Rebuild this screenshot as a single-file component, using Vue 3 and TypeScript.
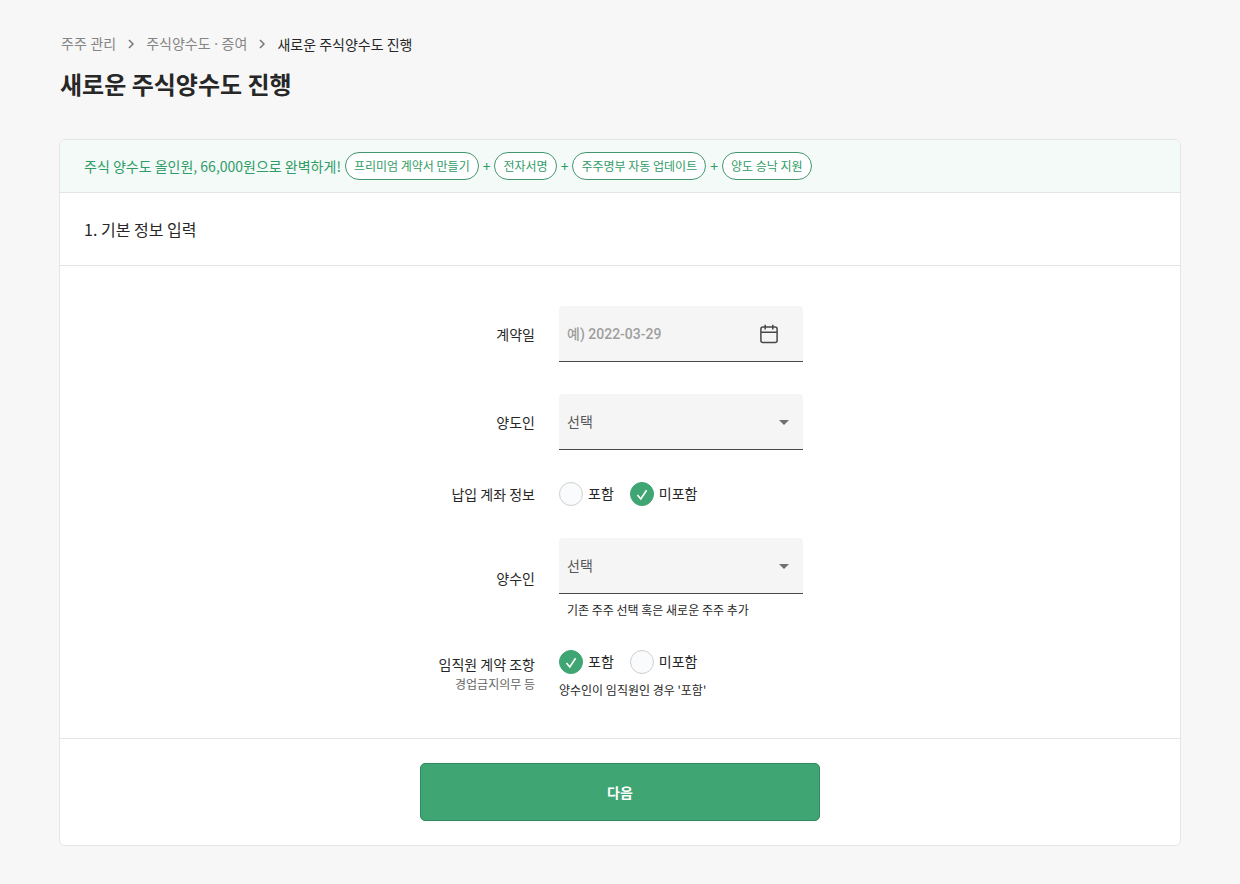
<script setup lang="ts">
import { ref } from 'vue'

const crumbs: string[] = ['주주 관리', '주식양수도 · 증여']
const features: string[] = ['프리미엄 계약서 만들기', '전자서명', '주주명부 자동 업데이트', '양도 승낙 지원']
const choices = [
  { value: 'include', label: '포함' },
  { value: 'exclude', label: '미포함' },
]

const contractDate = ref('')
const transferor = ref('')
const transferee = ref('')
const account = ref('exclude')
const clause = ref('include')
</script>

<template>
  <main class="page">
    <nav class="crumbs" aria-label="breadcrumb">
      <template v-for="crumb in crumbs" :key="crumb">
        <a href="#">{{ crumb }}</a>
        <svg width="6" height="10" viewBox="0 0 6 10" aria-hidden="true">
          <path d="M1 1l4 4-4 4" fill="none" stroke="#757575" stroke-width="1.5" />
        </svg>
      </template>
      <span class="current" aria-current="page">새로운 주식양수도 진행</span>
    </nav>
    <h1>새로운 주식양수도 진행</h1>

    <form class="card" @submit.prevent>
      <div class="banner">
        <span class="lead">주식 양수도 올인원, 66,000원으로 완벽하게!</span>
        <template v-for="(feature, i) in features" :key="feature">
          <span v-if="i > 0">+</span>
          <span class="chip">{{ feature }}</span>
        </template>
      </div>
      <h2>1. 기본 정보 입력</h2>

      <div class="fields">
        <label class="name" for="date">계약일</label>
        <div class="box">
          <input id="date" v-model="contractDate" class="date" type="text" placeholder="예) 2022-03-29" />
          <button class="calendar" type="button" aria-label="날짜 선택">
            <svg width="20" height="20" viewBox="0 0 20 20" fill="none" stroke="#484848" stroke-width="1.5" aria-hidden="true">
              <rect x="1.9" y="3" width="16.2" height="15.5" rx="2" />
              <path d="M2 8.2h16M6.2 .8v4.6M13.8 .8v4.6" />
            </svg>
          </button>
        </div>

        <label class="name" for="transferor">양도인</label>
        <div class="box">
          <select id="transferor" v-model="transferor">
            <option value="">선택</option>
          </select>
          <svg class="arrow" width="10" height="7" viewBox="0 0 10 7" aria-hidden="true"><path d="M0 2h10L5 7z" fill="#707070" /></svg>
        </div>

        <span id="account-label" class="name">납입 계좌 정보</span>
        <div class="radios" role="radiogroup" aria-labelledby="account-label">
          <label v-for="choice in choices" :key="choice.value">
            <input v-model="account" type="radio" name="account" :value="choice.value" />
            <svg class="tick" width="24" height="24" viewBox="0 0 24 24" aria-hidden="true"><path d="M7.4 13l3.4 4 5.8-8.8" /></svg>
            <span>{{ choice.label }}</span>
          </label>
        </div>

        <label class="name" for="transferee">양수인</label>
        <div>
          <div class="box">
            <select id="transferee" v-model="transferee" aria-describedby="transferee-hint">
              <option value="">선택</option>
            </select>
            <svg class="arrow" width="10" height="7" viewBox="0 0 10 7" aria-hidden="true"><path d="M0 2h10L5 7z" fill="#707070" /></svg>
          </div>
          <p id="transferee-hint" class="hint indented">기존 주주 선택 혹은 새로운 주주 추가</p>
        </div>

        <div id="clause-label" class="name">
          임직원 계약 조항
          <small>경업금지의무 등</small>
        </div>
        <div>
          <div class="radios" role="radiogroup" aria-labelledby="clause-label">
            <label v-for="choice in choices" :key="choice.value">
              <input v-model="clause" type="radio" name="clause" :value="choice.value" />
              <svg class="tick" width="24" height="24" viewBox="0 0 24 24" aria-hidden="true"><path d="M7.4 13l3.4 4 5.8-8.8" /></svg>
              <span>{{ choice.label }}</span>
            </label>
          </div>
          <p class="hint">양수인이 임직원인 경우 '포함'</p>
        </div>
      </div>

      <footer>
        <button class="next" type="submit">다음</button>
      </footer>
    </form>
  </main>
</template>

<style>
body {
  margin: 0;
  background: #f7f7f7;
}
</style>

<style scoped>
.page,
.page * {
  box-sizing: border-box;
}
.page {
  padding: 32px 59px 38px;
  color: #272727;
  font: 400 14px/24px "Noto Sans CJK KR", sans-serif;
}
.crumbs {
  display: flex;
  align-items: center;
  gap: 12px;
  padding-left: 2px;
}
.crumbs a {
  color: #858585;
  font-family: "Noto Sans", "Noto Sans CJK KR", sans-serif;
  text-decoration: none;
}
h1 {
  margin: 12px 0 39px;
  padding-left: 1px;
  font-size: 24px;
  font-weight: 700;
  line-height: 32px;
}
.card {
  border: 1px solid #e5e5e5;
  border-radius: 6px;
  background: #fff;
  overflow: hidden;
}
.banner {
  display: flex;
  flex-wrap: wrap;
  align-items: center;
  gap: 4px;
  padding: 12px 24px;
  border-bottom: 1px solid #e5e5e5;
  background: #f3faf7;
  color: #2f9c67;
}
.chip {
  padding: 0 8px;
  border: 1px solid #43966f;
  border-radius: 14px;
  background: #fff;
  font-size: 12px;
  line-height: 26px;
}
h2 {
  margin: 0;
  padding: 24px;
  border-bottom: 1px solid #e5e5e5;
  font-size: 16px;
  font-weight: 400;
  line-height: 24px;
}
.fields {
  display: grid;
  grid-template-columns: minmax(98px, max-content) 244px;
  justify-content: center;
  align-items: center;
  gap: 32px 24px;
  padding: 40px 24px;
}
.name {
  line-height: 20px;
  text-align: right;
}
.name small {
  display: block;
  color: #666;
  font-size: 12px;
}
.box {
  display: grid;
  align-items: center;
  height: 56px;
  border-bottom: 1px solid #484848;
  border-radius: 4px 4px 0 0;
  background: #f5f5f5;
}
.box > * {
  grid-area: 1 / 1;
}
.box input,
.box select {
  width: 100%;
  height: 55px;
  margin: 0;
  padding: 0 8px;
  border: 0;
  border-radius: 4px 4px 0 0;
  background: transparent;
  color: #565656;
  font: inherit;
  appearance: none;
}
.box select {
  padding-bottom: 2px;
}
.box .date {
  padding-right: 56px;
  font-family: Roboto, "Noto Sans CJK KR", sans-serif;
  font-weight: 500;
}
.date::placeholder {
  color: #9e9e9e;
  opacity: 1;
}
.calendar {
  justify-self: end;
  display: flex;
  margin-right: 24px;
  padding: 0;
  border: 0;
  background: none;
}
.arrow {
  justify-self: end;
  margin-right: 14px;
  pointer-events: none;
}
.radios {
  display: flex;
  gap: 16px;
}
.radios label {
  display: flex;
  align-items: center;
  gap: 5px;
}
.radios label span {
  line-height: 22px;
  padding-bottom: 2px;
}
.radios input {
  width: 24px;
  height: 24px;
  margin: 0 -29px 0 0;
  border: 1px solid #cfcfcf;
  border-radius: 50%;
  background: #fafbfc;
  appearance: none;
}
.radios input:checked {
  border-color: #3ea573;
  background: #3ea573;
}
.tick {
  z-index: 1;
  fill: none;
  stroke: transparent;
  stroke-width: 1.6;
  pointer-events: none;
}
input:checked + .tick {
  stroke: #fff;
}
.hint {
  margin: 8px 0 0;
  font-size: 12px;
  line-height: 16px;
}
.indented {
  padding-left: 8px;
}
footer {
  display: flex;
  justify-content: center;
  padding: 24px;
  border-top: 1px solid #e5e5e5;
}
.next {
  width: 400px;
  max-width: 100%;
  height: 58px;
  border: 1px solid #348a60;
  border-radius: 5px;
  background: #3ea573;
  color: #fff;
  font: inherit;
  font-weight: 700;
}
</style>
